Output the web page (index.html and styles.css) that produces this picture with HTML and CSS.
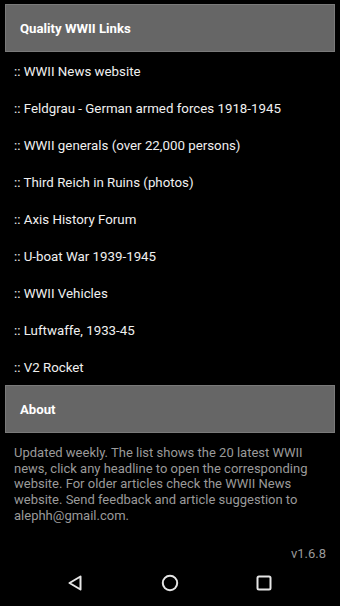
FILE: index.html
```
<!DOCTYPE html>
<html lang="en">
<head>
    <meta charset="UTF-8">
    <meta name="viewport" content="width=device-width, initial-scale=1.0">
    <title>WWII News</title>
    <link rel="stylesheet" href="styles.css">
</head>
<body>
    <div class="screen">
        <div class="content">
            <div class="section-header">Quality WWII Links</div>
            <ul class="link-list">
                <li>:: WWII News website</li>
                <li>:: Feldgrau - German armed forces 1918-1945</li>
                <li>:: WWII generals (over 22,000 persons)</li>
                <li>:: Third Reich in Ruins (photos)</li>
                <li>:: Axis History Forum</li>
                <li>:: U-boat War 1939-1945</li>
                <li>:: WWII Vehicles</li>
                <li>:: Luftwaffe, 1933-45</li>
                <li>:: V2 Rocket</li>
            </ul>

            <div class="section-header">About</div>
            <p class="about-text">Updated weekly. The list shows the 20 latest WWII news, click any headline to open the corresponding website. For older articles check the WWII News website. Send feedback and article suggestion to alephh@gmail.com.</p>
            <div class="version">v1.6.8</div>
        </div>

        <!-- Android navigation bar -->
        <div class="nav-bar">
            <svg class="nav-icon" width="18" height="18" viewBox="0 0 18 18">
                <path d="M14.5 2.5 L3.5 9 L14.5 15.5 Z" fill="none" stroke="#e6e6e6" stroke-width="2" stroke-linejoin="round"/>
            </svg>
            <svg class="nav-icon" width="18" height="18" viewBox="0 0 18 18">
                <circle cx="9" cy="9" r="7.2" fill="none" stroke="#e6e6e6" stroke-width="2"/>
            </svg>
            <svg class="nav-icon" width="18" height="18" viewBox="0 0 18 18">
                <rect x="2.5" y="2.5" width="13" height="13" rx="1.5" fill="none" stroke="#e6e6e6" stroke-width="2"/>
            </svg>
        </div>
    </div>
</body>
</html>
```

FILE: styles.css
```
* {
    margin: 0;
    padding: 0;
    box-sizing: border-box;
}

body {
    background-color: #000;
    font-family: Roboto, "Liberation Sans", sans-serif;
    font-size: 13px;
    color: #eee;
}

.screen {
    height: 606px;
    display: flex;
    flex-direction: column;
}

.content {
    flex: 1;
    padding: 4px 5px 0 5px;
}

.section-header {
    height: 48px;
    background-color: #666;
    border: 1px solid #7a7a7a;
    color: #fff;
    font-weight: bold;
    font-size: 13.2px;
    padding-left: 14px;
    display: flex;
    align-items: center;
}

.link-list {
    list-style: none;
}

.link-list li {
    height: 37px;
    line-height: 37px;
    padding-left: 9px;
    padding-top: 1px;
    font-size: 13.3px;
    color: #f0f0f0;
}

.about-text {
    color: #9a9a9a;
    line-height: 15.7px;
    padding: 12px 4px 0 9px;
}

.version {
    color: #9a9a9a;
    text-align: right;
    padding-right: 9px;
    margin-top: 22px;
}

.nav-bar {
    height: 48px;
    display: flex;
    justify-content: space-between;
    align-items: center;
    padding: 0 67px 0 66px;
}

.nav-icon {
    display: block;
}
```
